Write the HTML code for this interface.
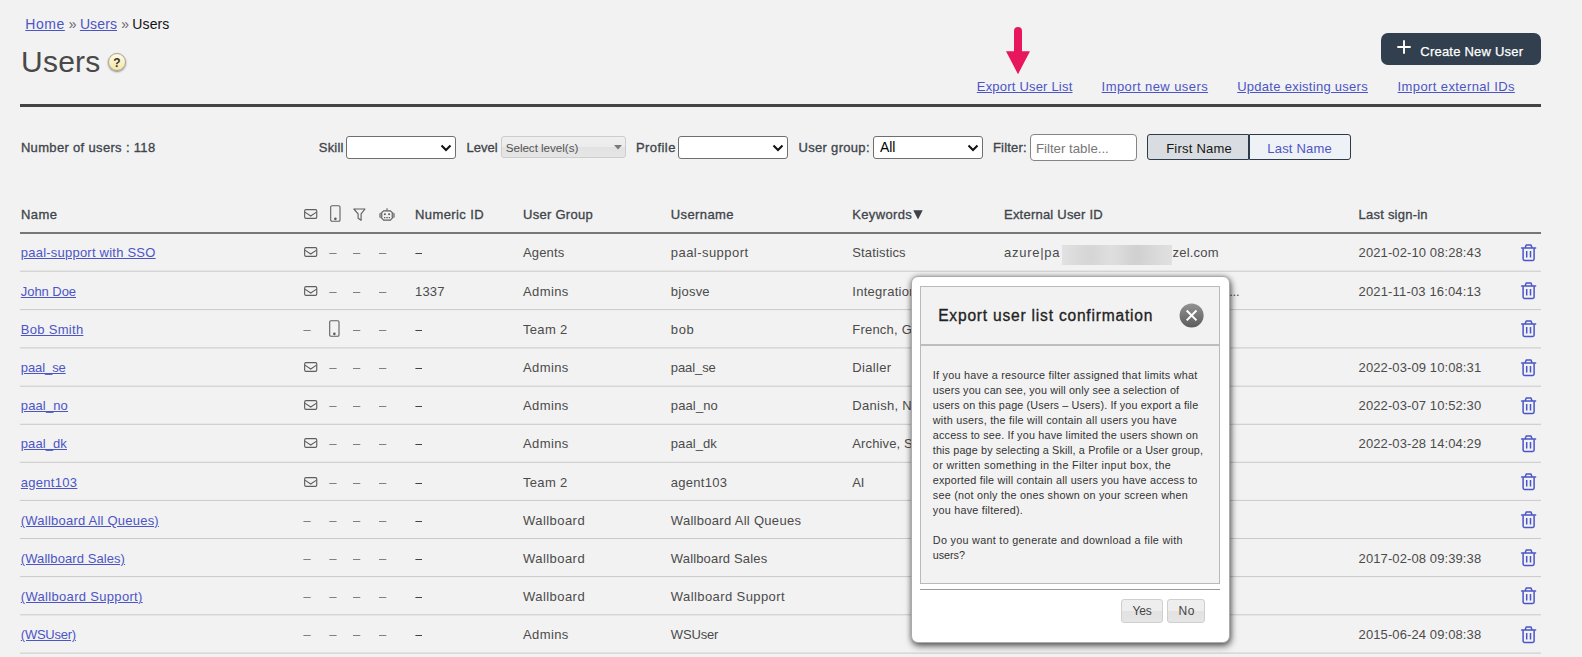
<!DOCTYPE html>
<html lang="en">
<head>
<meta charset="utf-8">
<title>Users</title>
<style>
html,body{margin:0;padding:0;}
body{width:1582px;height:657px;overflow:hidden;background:#f2f2f2;position:relative;font-family:"Liberation Sans",sans-serif;}
.t{position:absolute;white-space:nowrap;font-family:"Liberation Sans",sans-serif;font-weight:400;text-underline-offset:1px;text-decoration-thickness:1px;}
.a{position:absolute;}
.hr{position:absolute;left:20px;width:1521px;}
.sel{position:absolute;box-sizing:border-box;height:23px;top:136px;width:110px;background:#fff;border:1px solid #6f6f6f;border-radius:3px;}
.sel svg{position:absolute;right:3.4px;top:6px;}
.dash{position:absolute;height:1px;width:7px;background:#858585;}
.ico{position:absolute;overflow:visible;}
#modal{position:absolute;left:911px;top:276px;width:318.6px;height:366.6px;box-sizing:border-box;background:#fff;border:1px solid #ababab;border-radius:7px;box-shadow:1px 3px 7px rgba(0,0,0,.62),0 0 5px rgba(0,0,0,.22);}
#mpanel{position:absolute;left:920px;top:286px;width:300px;height:298px;box-sizing:border-box;background:#f2f2f2;border:1px solid #b9b9b9;}
.btn{position:absolute;box-sizing:border-box;top:599px;height:24px;border:1px solid #cfcfcf;border-radius:3px;background:linear-gradient(#eeeeee 0%,#eeeeee 50%,#e2e2e2 51%,#e6e6e6 100%);}
</style>
</head>
<body>

<!-- title rule -->
<div class="hr" style="top:104px;height:3px;background:#444;"></div>

<!-- help icon -->
<div class="a" style="left:108px;top:53px;width:18px;height:18px;box-sizing:border-box;border-radius:50%;border:1px solid #a9a48c;background:linear-gradient(#fffbe6,#f7e6a6);box-shadow:0 1px 2px rgba(0,0,0,.45);"></div>
<span class="t" style="left:113.2px;top:55.5px;font-size:12px;line-height:14px;font-weight:700;color:#333;">?</span>

<!-- red arrow -->
<svg class="ico" style="left:1004px;top:24px;" width="28" height="52" viewBox="0 0 28 52">
  <path d="M10 7 a4 4 0 0 1 8 0 V27.3 H26 L14 50.3 L2 27.3 H10 Z" fill="#e8175d"/>
</svg>

<!-- create button -->
<div class="a" style="left:1381px;top:33px;width:160px;height:32px;border-radius:7px;background:#313f4e;"></div>
<svg class="ico" style="left:1396.5px;top:40px;" width="14" height="14" viewBox="0 0 14 14"><path d="M7 0.3V13.7M0.3 7H13.7" stroke="#fff" stroke-width="1.9" fill="none"/></svg>

<!-- selects -->
<div class="sel" style="left:346px;"><svg width="12" height="10" viewBox="0 0 12 10"><path d="M1.5 2.5 L6 7 L10.5 2.5" fill="none" stroke="#111" stroke-width="2"/></svg></div>
<div class="sel" style="left:678px;"><svg width="12" height="10" viewBox="0 0 12 10"><path d="M1.5 2.5 L6 7 L10.5 2.5" fill="none" stroke="#111" stroke-width="2"/></svg></div>
<div class="sel" style="left:873px;"><svg width="12" height="10" viewBox="0 0 12 10"><path d="M1.5 2.5 L6 7 L10.5 2.5" fill="none" stroke="#111" stroke-width="2"/></svg></div>
<!-- level multiselect -->
<div class="a" style="left:501px;top:136px;width:125px;height:22px;box-sizing:border-box;border:1px solid #cdcdcd;border-radius:3px;background:linear-gradient(#efefef 0%,#ececec 50%,#e2e2e2 51%,#e6e6e6 100%);"></div>
<svg class="ico" style="left:613.5px;top:145px;" width="8" height="5" viewBox="0 0 8 5"><path d="M0 0H8L4 4.6Z" fill="#7a7a7a"/></svg>
<!-- filter input -->
<div class="a" style="left:1030px;top:134px;width:107px;height:27px;box-sizing:border-box;border:1px solid #858585;border-radius:4px;background:#fff;"></div>
<!-- name toggle -->
<div class="a" style="left:1147px;top:134px;width:102px;height:26px;box-sizing:border-box;border:1px solid #2c3a49;border-radius:3px 0 0 3px;background:#d9dce0;"></div>
<div class="a" style="left:1249px;top:134px;width:102px;height:26px;box-sizing:border-box;border:1px solid #2c3a49;border-radius:0 3px 3px 0;background:#eef1f6;"></div>

<!-- table header rule -->
<div class="hr" style="top:232px;height:2px;background:#767676;"></div>
<!-- sort triangle after Keywords -->
<svg class="ico" style="left:913px;top:209.5px;" width="10" height="10" viewBox="0 0 10 10"><path d="M0.3 0.3H9.7L5 9.6Z" fill="#3d4248"/></svg>

<!-- header icons -->
<svg class="ico" style="left:304px;top:209px" width="14" height="11" viewBox="0 0 14 11"><rect x="0.65" y="0.65" width="12.1" height="8.7" rx="1.3" fill="none" stroke="#5f5f5f" stroke-width="1.15"/><path d="M0.9 3.1 L6.7 7 L12.5 3.1" fill="none" stroke="#5f5f5f" stroke-width="1.1"/></svg><svg class="ico" style="left:329.5px;top:205.1px" width="12" height="18" viewBox="0 0 12 18"><rect x="0.7" y="0.7" width="9.3" height="15.5" rx="1.3" fill="none" stroke="#5f5f5f" stroke-width="1.08"/><circle cx="5.35" cy="13.8" r="1.35" fill="#5f5f5f"/></svg><svg class="ico" style="left:352.6px;top:207.6px" width="14" height="14" viewBox="0 0 14 14"><path d="M0.9 1 H12 L8.1 5.8 V12.3 L5.1 10.2 V5.8 Z" fill="none" stroke="#5f5f5f" stroke-width="1.15" stroke-linejoin="round"/></svg><svg class="ico" style="left:379px;top:207.6px" width="17" height="14" viewBox="0 0 17 14"><path d="M8 0.2V2.6" stroke="#5f5f5f" stroke-width="1.1"/><path d="M4.6 2.8 H11.4 L13.3 4.7 V10.2 L11.4 12.1 H4.6 L2.7 10.2 V4.7 Z" fill="none" stroke="#5f5f5f" stroke-width="1.2" stroke-linejoin="round"/><rect x="0.6" y="5.2" width="2" height="4.4" rx="0.5" fill="#9a9a9a" stroke="#5f5f5f" stroke-width="0.5"/><rect x="13.4" y="5.2" width="2" height="4.4" rx="0.5" fill="#9a9a9a" stroke="#5f5f5f" stroke-width="0.5"/><circle cx="5.9" cy="6.3" r="1.05" fill="#5f5f5f"/><circle cx="10.1" cy="6.3" r="1.05" fill="#5f5f5f"/><path d="M5 9.6H6.3M7.2 9.6H8.8M9.7 9.6H11" stroke="#5f5f5f" stroke-width="1.1"/></svg>

<svg class="ico" style="left:0;top:0" width="1582" height="657" viewBox="0 0 1582 657"><rect x="20" y="270.70" width="1521" height="1" fill="#c9c9c9"/><rect x="329.3" y="253.00" width="7.3" height="1" fill="#808080"/><rect x="353" y="253.00" width="7.3" height="1" fill="#808080"/><rect x="379" y="253.00" width="7.3" height="1" fill="#808080"/><rect x="415.4" y="253.00" width="6.6" height="1" fill="#444"/><rect x="20" y="309.10" width="1521" height="1" fill="#c9c9c9"/><rect x="329.3" y="292.00" width="7.3" height="1" fill="#808080"/><rect x="353" y="292.00" width="7.3" height="1" fill="#808080"/><rect x="379" y="292.00" width="7.3" height="1" fill="#808080"/><rect x="20" y="347.40" width="1521" height="1" fill="#c9c9c9"/><rect x="303.4" y="330.00" width="7.3" height="1" fill="#808080"/><rect x="353" y="330.00" width="7.3" height="1" fill="#808080"/><rect x="379" y="330.00" width="7.3" height="1" fill="#808080"/><rect x="415.4" y="330.00" width="6.6" height="1" fill="#444"/><rect x="20" y="385.70" width="1521" height="1" fill="#c9c9c9"/><rect x="329.3" y="368.00" width="7.3" height="1" fill="#808080"/><rect x="353" y="368.00" width="7.3" height="1" fill="#808080"/><rect x="379" y="368.00" width="7.3" height="1" fill="#808080"/><rect x="415.4" y="368.00" width="6.6" height="1" fill="#444"/><rect x="20" y="423.80" width="1521" height="1" fill="#c9c9c9"/><rect x="329.3" y="406.00" width="7.3" height="1" fill="#808080"/><rect x="353" y="406.00" width="7.3" height="1" fill="#808080"/><rect x="379" y="406.00" width="7.3" height="1" fill="#808080"/><rect x="415.4" y="406.00" width="6.6" height="1" fill="#444"/><rect x="20" y="461.80" width="1521" height="1" fill="#c9c9c9"/><rect x="329.3" y="444.00" width="7.3" height="1" fill="#808080"/><rect x="353" y="444.00" width="7.3" height="1" fill="#808080"/><rect x="379" y="444.00" width="7.3" height="1" fill="#808080"/><rect x="415.4" y="444.00" width="6.6" height="1" fill="#444"/><rect x="20" y="499.90" width="1521" height="1" fill="#c9c9c9"/><rect x="329.3" y="483.00" width="7.3" height="1" fill="#808080"/><rect x="353" y="483.00" width="7.3" height="1" fill="#808080"/><rect x="379" y="483.00" width="7.3" height="1" fill="#808080"/><rect x="415.4" y="483.00" width="6.6" height="1" fill="#444"/><rect x="20" y="538.00" width="1521" height="1" fill="#c9c9c9"/><rect x="303.4" y="521.00" width="7.3" height="1" fill="#808080"/><rect x="329.3" y="521.00" width="7.3" height="1" fill="#808080"/><rect x="353" y="521.00" width="7.3" height="1" fill="#808080"/><rect x="379" y="521.00" width="7.3" height="1" fill="#808080"/><rect x="415.4" y="521.00" width="6.6" height="1" fill="#444"/><rect x="20" y="576.10" width="1521" height="1" fill="#c9c9c9"/><rect x="303.4" y="559.00" width="7.3" height="1" fill="#808080"/><rect x="329.3" y="559.00" width="7.3" height="1" fill="#808080"/><rect x="353" y="559.00" width="7.3" height="1" fill="#808080"/><rect x="379" y="559.00" width="7.3" height="1" fill="#808080"/><rect x="415.4" y="559.00" width="6.6" height="1" fill="#444"/><rect x="20" y="614.30" width="1521" height="1" fill="#c9c9c9"/><rect x="303.4" y="597.00" width="7.3" height="1" fill="#808080"/><rect x="329.3" y="597.00" width="7.3" height="1" fill="#808080"/><rect x="353" y="597.00" width="7.3" height="1" fill="#808080"/><rect x="379" y="597.00" width="7.3" height="1" fill="#808080"/><rect x="415.4" y="597.00" width="6.6" height="1" fill="#444"/><rect x="20" y="652.60" width="1521" height="1" fill="#c9c9c9"/><rect x="303.4" y="635.00" width="7.3" height="1" fill="#808080"/><rect x="329.3" y="635.00" width="7.3" height="1" fill="#808080"/><rect x="353" y="635.00" width="7.3" height="1" fill="#808080"/><rect x="379" y="635.00" width="7.3" height="1" fill="#808080"/><rect x="415.4" y="635.00" width="6.6" height="1" fill="#444"/></svg>
<svg class="ico" style="left:303.7px;top:246.85px" width="14" height="11" viewBox="0 0 14 11"><rect x="0.65" y="0.65" width="12.1" height="8.7" rx="1.3" fill="none" stroke="#5f5f5f" stroke-width="1.15"/><path d="M0.9 3.1 L6.7 7 L12.5 3.1" fill="none" stroke="#5f5f5f" stroke-width="1.1"/></svg><svg class="ico" style="left:1520.7px;top:243.7px" width="16" height="18" viewBox="0 0 16 18"><path d="M0.6 4.1H14.6" stroke="#4a55c8" stroke-width="1.5" stroke-linecap="round"/><path d="M4.1 3.9 L5.2 1.1 H10 L11.1 3.9" fill="none" stroke="#4a55c8" stroke-width="1.5" stroke-linejoin="round"/><path d="M2.1 4.3 V15 a1.4 1.4 0 0 0 1.4 1.4 H11.7 a1.4 1.4 0 0 0 1.4 -1.4 V4.3" fill="none" stroke="#4a55c8" stroke-width="1.5"/><path d="M5.7 6.9V13.6M9.5 6.9V13.6" stroke="#4a55c8" stroke-width="1.5"/></svg>
<svg class="ico" style="left:303.7px;top:285.85px" width="14" height="11" viewBox="0 0 14 11"><rect x="0.65" y="0.65" width="12.1" height="8.7" rx="1.3" fill="none" stroke="#5f5f5f" stroke-width="1.15"/><path d="M0.9 3.1 L6.7 7 L12.5 3.1" fill="none" stroke="#5f5f5f" stroke-width="1.1"/></svg><svg class="ico" style="left:1520.7px;top:282.0px" width="16" height="18" viewBox="0 0 16 18"><path d="M0.6 4.1H14.6" stroke="#4a55c8" stroke-width="1.5" stroke-linecap="round"/><path d="M4.1 3.9 L5.2 1.1 H10 L11.1 3.9" fill="none" stroke="#4a55c8" stroke-width="1.5" stroke-linejoin="round"/><path d="M2.1 4.3 V15 a1.4 1.4 0 0 0 1.4 1.4 H11.7 a1.4 1.4 0 0 0 1.4 -1.4 V4.3" fill="none" stroke="#4a55c8" stroke-width="1.5"/><path d="M5.7 6.9V13.6M9.5 6.9V13.6" stroke="#4a55c8" stroke-width="1.5"/></svg>
<svg class="ico" style="left:329.25px;top:319.8px" width="12" height="18" viewBox="0 0 12 18"><rect x="0.7" y="0.7" width="9.3" height="15.5" rx="1.3" fill="none" stroke="#5f5f5f" stroke-width="1.08"/><circle cx="5.35" cy="13.8" r="1.35" fill="#5f5f5f"/></svg><svg class="ico" style="left:1520.7px;top:320.35px" width="16" height="18" viewBox="0 0 16 18"><path d="M0.6 4.1H14.6" stroke="#4a55c8" stroke-width="1.5" stroke-linecap="round"/><path d="M4.1 3.9 L5.2 1.1 H10 L11.1 3.9" fill="none" stroke="#4a55c8" stroke-width="1.5" stroke-linejoin="round"/><path d="M2.1 4.3 V15 a1.4 1.4 0 0 0 1.4 1.4 H11.7 a1.4 1.4 0 0 0 1.4 -1.4 V4.3" fill="none" stroke="#4a55c8" stroke-width="1.5"/><path d="M5.7 6.9V13.6M9.5 6.9V13.6" stroke="#4a55c8" stroke-width="1.5"/></svg>
<svg class="ico" style="left:303.7px;top:361.85px" width="14" height="11" viewBox="0 0 14 11"><rect x="0.65" y="0.65" width="12.1" height="8.7" rx="1.3" fill="none" stroke="#5f5f5f" stroke-width="1.15"/><path d="M0.9 3.1 L6.7 7 L12.5 3.1" fill="none" stroke="#5f5f5f" stroke-width="1.1"/></svg><svg class="ico" style="left:1520.7px;top:358.65px" width="16" height="18" viewBox="0 0 16 18"><path d="M0.6 4.1H14.6" stroke="#4a55c8" stroke-width="1.5" stroke-linecap="round"/><path d="M4.1 3.9 L5.2 1.1 H10 L11.1 3.9" fill="none" stroke="#4a55c8" stroke-width="1.5" stroke-linejoin="round"/><path d="M2.1 4.3 V15 a1.4 1.4 0 0 0 1.4 1.4 H11.7 a1.4 1.4 0 0 0 1.4 -1.4 V4.3" fill="none" stroke="#4a55c8" stroke-width="1.5"/><path d="M5.7 6.9V13.6M9.5 6.9V13.6" stroke="#4a55c8" stroke-width="1.5"/></svg>
<svg class="ico" style="left:303.7px;top:399.85px" width="14" height="11" viewBox="0 0 14 11"><rect x="0.65" y="0.65" width="12.1" height="8.7" rx="1.3" fill="none" stroke="#5f5f5f" stroke-width="1.15"/><path d="M0.9 3.1 L6.7 7 L12.5 3.1" fill="none" stroke="#5f5f5f" stroke-width="1.1"/></svg><svg class="ico" style="left:1520.7px;top:396.85px" width="16" height="18" viewBox="0 0 16 18"><path d="M0.6 4.1H14.6" stroke="#4a55c8" stroke-width="1.5" stroke-linecap="round"/><path d="M4.1 3.9 L5.2 1.1 H10 L11.1 3.9" fill="none" stroke="#4a55c8" stroke-width="1.5" stroke-linejoin="round"/><path d="M2.1 4.3 V15 a1.4 1.4 0 0 0 1.4 1.4 H11.7 a1.4 1.4 0 0 0 1.4 -1.4 V4.3" fill="none" stroke="#4a55c8" stroke-width="1.5"/><path d="M5.7 6.9V13.6M9.5 6.9V13.6" stroke="#4a55c8" stroke-width="1.5"/></svg>
<svg class="ico" style="left:303.7px;top:437.85px" width="14" height="11" viewBox="0 0 14 11"><rect x="0.65" y="0.65" width="12.1" height="8.7" rx="1.3" fill="none" stroke="#5f5f5f" stroke-width="1.15"/><path d="M0.9 3.1 L6.7 7 L12.5 3.1" fill="none" stroke="#5f5f5f" stroke-width="1.1"/></svg><svg class="ico" style="left:1520.7px;top:434.9px" width="16" height="18" viewBox="0 0 16 18"><path d="M0.6 4.1H14.6" stroke="#4a55c8" stroke-width="1.5" stroke-linecap="round"/><path d="M4.1 3.9 L5.2 1.1 H10 L11.1 3.9" fill="none" stroke="#4a55c8" stroke-width="1.5" stroke-linejoin="round"/><path d="M2.1 4.3 V15 a1.4 1.4 0 0 0 1.4 1.4 H11.7 a1.4 1.4 0 0 0 1.4 -1.4 V4.3" fill="none" stroke="#4a55c8" stroke-width="1.5"/><path d="M5.7 6.9V13.6M9.5 6.9V13.6" stroke="#4a55c8" stroke-width="1.5"/></svg>
<svg class="ico" style="left:303.7px;top:476.85px" width="14" height="11" viewBox="0 0 14 11"><rect x="0.65" y="0.65" width="12.1" height="8.7" rx="1.3" fill="none" stroke="#5f5f5f" stroke-width="1.15"/><path d="M0.9 3.1 L6.7 7 L12.5 3.1" fill="none" stroke="#5f5f5f" stroke-width="1.1"/></svg><svg class="ico" style="left:1520.7px;top:472.95px" width="16" height="18" viewBox="0 0 16 18"><path d="M0.6 4.1H14.6" stroke="#4a55c8" stroke-width="1.5" stroke-linecap="round"/><path d="M4.1 3.9 L5.2 1.1 H10 L11.1 3.9" fill="none" stroke="#4a55c8" stroke-width="1.5" stroke-linejoin="round"/><path d="M2.1 4.3 V15 a1.4 1.4 0 0 0 1.4 1.4 H11.7 a1.4 1.4 0 0 0 1.4 -1.4 V4.3" fill="none" stroke="#4a55c8" stroke-width="1.5"/><path d="M5.7 6.9V13.6M9.5 6.9V13.6" stroke="#4a55c8" stroke-width="1.5"/></svg>
<svg class="ico" style="left:1520.7px;top:511.05px" width="16" height="18" viewBox="0 0 16 18"><path d="M0.6 4.1H14.6" stroke="#4a55c8" stroke-width="1.5" stroke-linecap="round"/><path d="M4.1 3.9 L5.2 1.1 H10 L11.1 3.9" fill="none" stroke="#4a55c8" stroke-width="1.5" stroke-linejoin="round"/><path d="M2.1 4.3 V15 a1.4 1.4 0 0 0 1.4 1.4 H11.7 a1.4 1.4 0 0 0 1.4 -1.4 V4.3" fill="none" stroke="#4a55c8" stroke-width="1.5"/><path d="M5.7 6.9V13.6M9.5 6.9V13.6" stroke="#4a55c8" stroke-width="1.5"/></svg>
<svg class="ico" style="left:1520.7px;top:549.15px" width="16" height="18" viewBox="0 0 16 18"><path d="M0.6 4.1H14.6" stroke="#4a55c8" stroke-width="1.5" stroke-linecap="round"/><path d="M4.1 3.9 L5.2 1.1 H10 L11.1 3.9" fill="none" stroke="#4a55c8" stroke-width="1.5" stroke-linejoin="round"/><path d="M2.1 4.3 V15 a1.4 1.4 0 0 0 1.4 1.4 H11.7 a1.4 1.4 0 0 0 1.4 -1.4 V4.3" fill="none" stroke="#4a55c8" stroke-width="1.5"/><path d="M5.7 6.9V13.6M9.5 6.9V13.6" stroke="#4a55c8" stroke-width="1.5"/></svg>
<svg class="ico" style="left:1520.7px;top:587.3px" width="16" height="18" viewBox="0 0 16 18"><path d="M0.6 4.1H14.6" stroke="#4a55c8" stroke-width="1.5" stroke-linecap="round"/><path d="M4.1 3.9 L5.2 1.1 H10 L11.1 3.9" fill="none" stroke="#4a55c8" stroke-width="1.5" stroke-linejoin="round"/><path d="M2.1 4.3 V15 a1.4 1.4 0 0 0 1.4 1.4 H11.7 a1.4 1.4 0 0 0 1.4 -1.4 V4.3" fill="none" stroke="#4a55c8" stroke-width="1.5"/><path d="M5.7 6.9V13.6M9.5 6.9V13.6" stroke="#4a55c8" stroke-width="1.5"/></svg>
<svg class="ico" style="left:1520.7px;top:625.55px" width="16" height="18" viewBox="0 0 16 18"><path d="M0.6 4.1H14.6" stroke="#4a55c8" stroke-width="1.5" stroke-linecap="round"/><path d="M4.1 3.9 L5.2 1.1 H10 L11.1 3.9" fill="none" stroke="#4a55c8" stroke-width="1.5" stroke-linejoin="round"/><path d="M2.1 4.3 V15 a1.4 1.4 0 0 0 1.4 1.4 H11.7 a1.4 1.4 0 0 0 1.4 -1.4 V4.3" fill="none" stroke="#4a55c8" stroke-width="1.5"/><path d="M5.7 6.9V13.6M9.5 6.9V13.6" stroke="#4a55c8" stroke-width="1.5"/></svg>


<!-- blurred patch -->
<div class="a" style="left:1062px;top:245px;width:110px;height:20px;overflow:hidden;background:#dedede;">
  <div style="position:absolute;left:-10px;top:-6px;width:130px;height:32px;filter:blur(4px);background:linear-gradient(90deg,#e6e6e6 0%,#d4d4d4 30%,#e0e0e0 45%,#cfcfcf 65%,#dadada 80%,#e4e4e4 100%);"></div>
</div>

<span class="t" style="left:25.3px;top:15.8px;font-size:14px;line-height:16px;letter-spacing:0.555px;color:#4c55c6;text-decoration:underline;">Home</span>
<span class="t" style="left:68.7px;top:15.8px;font-size:14px;line-height:16px;letter-spacing:-0.844px;color:#666;">»</span>
<span class="t" style="left:79.9px;top:15.8px;font-size:14px;line-height:16px;letter-spacing:0.116px;color:#4c55c6;text-decoration:underline;">Users</span>
<span class="t" style="left:121.2px;top:15.8px;font-size:14px;line-height:16px;letter-spacing:-0.844px;color:#666;">»</span>
<span class="t" style="left:132.3px;top:15.8px;font-size:14px;line-height:16px;letter-spacing:0.116px;color:#111;">Users</span>
<span class="t" style="left:21.0px;top:44.8px;font-size:30px;line-height:33px;letter-spacing:0.247px;color:#494949;">Users</span>
<span class="t" style="left:976.8px;top:79.1px;font-size:13px;line-height:15px;letter-spacing:0.200px;color:#4c55c6;text-decoration:underline;">Export User List</span>
<span class="t" style="left:1101.6px;top:79.1px;font-size:13px;line-height:15px;letter-spacing:0.423px;color:#4c55c6;text-decoration:underline;">Import new users</span>
<span class="t" style="left:1237.2px;top:79.1px;font-size:13px;line-height:15px;letter-spacing:0.276px;color:#4c55c6;text-decoration:underline;">Update existing users</span>
<span class="t" style="left:1397.6px;top:79.1px;font-size:13px;line-height:15px;letter-spacing:0.390px;color:#4c55c6;text-decoration:underline;">Import external IDs</span>
<span class="t" style="left:1420.3px;top:44.2px;font-size:13px;line-height:15px;letter-spacing:0.219px;color:#ffffff;-webkit-text-stroke:0.25px;">Create New User</span>
<span class="t" style="left:20.9px;top:140.1px;font-size:13px;line-height:15px;letter-spacing:0.331px;color:#40454b;-webkit-text-stroke:0.32px;">Number of users : 118</span>
<span class="t" style="left:318.8px;top:140.1px;font-size:13px;line-height:15px;letter-spacing:0.198px;color:#40454b;-webkit-text-stroke:0.32px;">Skill</span>
<span class="t" style="left:466.4px;top:140.1px;font-size:13px;line-height:15px;letter-spacing:0.044px;color:#40454b;-webkit-text-stroke:0.32px;">Level</span>
<span class="t" style="left:635.9px;top:140.1px;font-size:13px;line-height:15px;letter-spacing:0.443px;color:#40454b;-webkit-text-stroke:0.32px;">Profile</span>
<span class="t" style="left:798.5px;top:140.1px;font-size:13px;line-height:15px;letter-spacing:0.307px;color:#40454b;-webkit-text-stroke:0.32px;">User group:</span>
<span class="t" style="left:993.0px;top:140.1px;font-size:13px;line-height:15px;letter-spacing:0.171px;color:#40454b;-webkit-text-stroke:0.32px;">Filter:</span>
<span class="t" style="left:505.7px;top:141.2px;font-size:11.7px;line-height:13px;letter-spacing:-0.054px;color:#555;">Select level(s)</span>
<span class="t" style="left:1036.0px;top:141.2px;font-size:13.3px;line-height:15px;letter-spacing:-0.025px;color:#787878;">Filter table...</span>
<span class="t" style="left:880.0px;top:138.8px;font-size:14px;line-height:16px;letter-spacing:-0.087px;color:#000;">All</span>
<span class="t" style="left:1166.2px;top:140.6px;font-size:13px;line-height:15px;letter-spacing:0.230px;color:#151515;">First Name</span>
<span class="t" style="left:1267.3px;top:140.6px;font-size:13px;line-height:15px;letter-spacing:0.188px;color:#4c55c6;">Last Name</span>
<span class="t" style="left:20.9px;top:207.0px;font-size:13px;line-height:15px;letter-spacing:0.499px;color:#40454b;-webkit-text-stroke:0.32px;">Name</span>
<span class="t" style="left:415.0px;top:207.0px;font-size:13px;line-height:15px;letter-spacing:0.412px;color:#40454b;-webkit-text-stroke:0.32px;">Numeric ID</span>
<span class="t" style="left:523.0px;top:207.0px;font-size:13px;line-height:15px;letter-spacing:0.280px;color:#40454b;-webkit-text-stroke:0.32px;">User Group</span>
<span class="t" style="left:670.8px;top:207.0px;font-size:13px;line-height:15px;letter-spacing:0.399px;color:#40454b;-webkit-text-stroke:0.32px;">Username</span>
<span class="t" style="left:852.3px;top:207.0px;font-size:13px;line-height:15px;letter-spacing:0.338px;color:#40454b;-webkit-text-stroke:0.32px;">Keywords</span>
<span class="t" style="left:1004.0px;top:207.0px;font-size:13px;line-height:15px;letter-spacing:0.219px;color:#40454b;-webkit-text-stroke:0.32px;">External User ID</span>
<span class="t" style="left:1358.6px;top:207.0px;font-size:13px;line-height:15px;letter-spacing:0.223px;color:#40454b;-webkit-text-stroke:0.32px;">Last sign-in</span>
<span class="t" style="left:20.8px;top:245.0px;font-size:13px;line-height:15px;letter-spacing:0.225px;color:#4c55c6;text-decoration:underline;">paal-support with SSO</span>
<span class="t" style="left:523.0px;top:245.0px;font-size:13px;line-height:15px;letter-spacing:0.151px;color:#4b4b4b;">Agents</span>
<span class="t" style="left:670.8px;top:245.0px;font-size:13px;line-height:15px;letter-spacing:0.453px;color:#4b4b4b;">paal-support</span>
<span class="t" style="left:852.3px;top:245.0px;font-size:13px;line-height:15px;letter-spacing:0.142px;color:#4b4b4b;">Statistics</span>
<span class="t" style="left:1358.6px;top:245.0px;font-size:13px;line-height:15px;letter-spacing:0.101px;color:#4b4b4b;">2021-02-10 08:28:43</span>
<span class="t" style="left:20.8px;top:284.0px;font-size:13px;line-height:15px;letter-spacing:-0.059px;color:#4c55c6;text-decoration:underline;">John Doe</span>
<span class="t" style="left:415.0px;top:284.0px;font-size:13px;line-height:15px;letter-spacing:0.203px;color:#4b4b4b;">1337</span>
<span class="t" style="left:523.0px;top:284.0px;font-size:13px;line-height:15px;letter-spacing:0.385px;color:#4b4b4b;">Admins</span>
<span class="t" style="left:670.8px;top:284.0px;font-size:13px;line-height:15px;letter-spacing:0.245px;color:#4b4b4b;">bjosve</span>
<span class="t" style="left:852.3px;top:284.0px;font-size:13px;line-height:15px;letter-spacing:0.276px;color:#4b4b4b;">Integration, Statistics</span>
<span class="t" style="left:1358.6px;top:284.0px;font-size:13px;line-height:15px;letter-spacing:0.152px;color:#4b4b4b;">2021-11-03 16:04:13</span>
<span class="t" style="left:20.8px;top:322.0px;font-size:13px;line-height:15px;letter-spacing:0.292px;color:#4c55c6;text-decoration:underline;">Bob Smith</span>
<span class="t" style="left:523.0px;top:322.0px;font-size:13px;line-height:15px;letter-spacing:0.315px;color:#4b4b4b;">Team 2</span>
<span class="t" style="left:670.8px;top:322.0px;font-size:13px;line-height:15px;letter-spacing:0.677px;color:#4b4b4b;">bob</span>
<span class="t" style="left:852.3px;top:322.0px;font-size:13px;line-height:15px;letter-spacing:0.206px;color:#4b4b4b;">French, German</span>
<span class="t" style="left:20.8px;top:360.0px;font-size:13px;line-height:15px;letter-spacing:-0.096px;color:#4c55c6;text-decoration:underline;">paal_se</span>
<span class="t" style="left:523.0px;top:360.0px;font-size:13px;line-height:15px;letter-spacing:0.385px;color:#4b4b4b;">Admins</span>
<span class="t" style="left:670.8px;top:360.0px;font-size:13px;line-height:15px;letter-spacing:-0.096px;color:#4b4b4b;">paal_se</span>
<span class="t" style="left:852.3px;top:360.0px;font-size:13px;line-height:15px;letter-spacing:0.326px;color:#4b4b4b;">Dialler</span>
<span class="t" style="left:1358.6px;top:360.0px;font-size:13px;line-height:15px;letter-spacing:0.101px;color:#4b4b4b;">2022-03-09 10:08:31</span>
<span class="t" style="left:20.8px;top:398.0px;font-size:13px;line-height:15px;letter-spacing:0.127px;color:#4c55c6;text-decoration:underline;">paal_no</span>
<span class="t" style="left:523.0px;top:398.0px;font-size:13px;line-height:15px;letter-spacing:0.385px;color:#4b4b4b;">Admins</span>
<span class="t" style="left:670.8px;top:398.0px;font-size:13px;line-height:15px;letter-spacing:0.127px;color:#4b4b4b;">paal_no</span>
<span class="t" style="left:852.3px;top:398.0px;font-size:13px;line-height:15px;letter-spacing:0.283px;color:#4b4b4b;">Danish, Norwegian</span>
<span class="t" style="left:1358.6px;top:398.0px;font-size:13px;line-height:15px;letter-spacing:0.101px;color:#4b4b4b;">2022-03-07 10:52:30</span>
<span class="t" style="left:20.8px;top:436.0px;font-size:13px;line-height:15px;letter-spacing:0.089px;color:#4c55c6;text-decoration:underline;">paal_dk</span>
<span class="t" style="left:523.0px;top:436.0px;font-size:13px;line-height:15px;letter-spacing:0.385px;color:#4b4b4b;">Admins</span>
<span class="t" style="left:670.8px;top:436.0px;font-size:13px;line-height:15px;letter-spacing:0.089px;color:#4b4b4b;">paal_dk</span>
<span class="t" style="left:852.3px;top:436.0px;font-size:13px;line-height:15px;letter-spacing:0.126px;color:#4b4b4b;">Archive, Statistics</span>
<span class="t" style="left:1358.6px;top:436.0px;font-size:13px;line-height:15px;letter-spacing:0.101px;color:#4b4b4b;">2022-03-28 14:04:29</span>
<span class="t" style="left:20.8px;top:475.0px;font-size:13px;line-height:15px;letter-spacing:0.283px;color:#4c55c6;text-decoration:underline;">agent103</span>
<span class="t" style="left:523.0px;top:475.0px;font-size:13px;line-height:15px;letter-spacing:0.315px;color:#4b4b4b;">Team 2</span>
<span class="t" style="left:670.8px;top:475.0px;font-size:13px;line-height:15px;letter-spacing:0.283px;color:#4b4b4b;">agent103</span>
<span class="t" style="left:852.3px;top:475.0px;font-size:13px;line-height:15px;letter-spacing:-0.219px;color:#4b4b4b;">AI</span>
<span class="t" style="left:20.8px;top:513.0px;font-size:13px;line-height:15px;letter-spacing:0.224px;color:#4c55c6;text-decoration:underline;">(Wallboard All Queues)</span>
<span class="t" style="left:523.0px;top:513.0px;font-size:13px;line-height:15px;letter-spacing:0.446px;color:#4b4b4b;">Wallboard</span>
<span class="t" style="left:670.8px;top:513.0px;font-size:13px;line-height:15px;letter-spacing:0.296px;color:#4b4b4b;">Wallboard All Queues</span>
<span class="t" style="left:20.8px;top:551.0px;font-size:13px;line-height:15px;letter-spacing:0.082px;color:#4c55c6;text-decoration:underline;">(Wallboard Sales)</span>
<span class="t" style="left:523.0px;top:551.0px;font-size:13px;line-height:15px;letter-spacing:0.446px;color:#4b4b4b;">Wallboard</span>
<span class="t" style="left:670.8px;top:551.0px;font-size:13px;line-height:15px;letter-spacing:0.158px;color:#4b4b4b;">Wallboard Sales</span>
<span class="t" style="left:1358.6px;top:551.0px;font-size:13px;line-height:15px;letter-spacing:0.101px;color:#4b4b4b;">2017-02-08 09:39:38</span>
<span class="t" style="left:20.8px;top:589.0px;font-size:13px;line-height:15px;letter-spacing:0.317px;color:#4c55c6;text-decoration:underline;">(Wallboard Support)</span>
<span class="t" style="left:523.0px;top:589.0px;font-size:13px;line-height:15px;letter-spacing:0.446px;color:#4b4b4b;">Wallboard</span>
<span class="t" style="left:670.8px;top:589.0px;font-size:13px;line-height:15px;letter-spacing:0.414px;color:#4b4b4b;">Wallboard Support</span>
<span class="t" style="left:20.8px;top:627.0px;font-size:13px;line-height:15px;letter-spacing:-0.244px;color:#4c55c6;text-decoration:underline;">(WSUser)</span>
<span class="t" style="left:523.0px;top:627.0px;font-size:13px;line-height:15px;letter-spacing:0.385px;color:#4b4b4b;">Admins</span>
<span class="t" style="left:670.8px;top:627.0px;font-size:13px;line-height:15px;letter-spacing:-0.161px;color:#4b4b4b;">WSUser</span>
<span class="t" style="left:1358.6px;top:627.0px;font-size:13px;line-height:15px;letter-spacing:0.101px;color:#4b4b4b;">2015-06-24 09:08:38</span>
<span class="t" style="left:1004.0px;top:245.0px;font-size:13px;line-height:15px;letter-spacing:0.734px;color:#4b4b4b;">azure|pa</span>
<span class="t" style="left:1172.5px;top:245.0px;font-size:13px;line-height:15px;letter-spacing:0.199px;color:#4b4b4b;">zel.com</span>
<span class="t" style="left:1229.2px;top:284.0px;font-size:13px;line-height:15px;letter-spacing:-0.248px;color:#4b4b4b;">...</span>

<!-- modal -->
<div id="modal"></div>
<div id="mpanel"></div>
<div class="a" style="left:921px;top:344px;width:298px;height:2px;background:#bdbdbd;"></div>
<div class="a" style="left:920px;top:589px;width:300px;height:1px;background:#9a9a9a;"></div>
<!-- close button -->
<svg class="ico" style="left:1178px;top:302px;" width="28" height="28" viewBox="0 0 28 28">
  <defs><linearGradient id="cg" x1="0" y1="0" x2="0" y2="1"><stop offset="0" stop-color="#939393"/><stop offset="1" stop-color="#5c5c5c"/></linearGradient></defs>
  <circle cx="13.6" cy="13.45" r="12" fill="url(#cg)"/>
  <path d="M8.7 8.55L18.5 18.35M18.5 8.55L8.7 18.35" stroke="#fff" stroke-width="2.05" fill="none"/>
</svg>
<div class="btn" style="left:1121px;width:41.5px;"></div>
<div class="btn" style="left:1167px;width:38px;"></div>
<span class="t" style="left:938.2px;top:307.1px;font-size:15.6px;line-height:17px;letter-spacing:0.779px;color:#222;-webkit-text-stroke:0.32px;">Export user list confirmation</span>
<span class="t" style="left:932.8px;top:368.7px;font-size:10.8px;line-height:12px;letter-spacing:0.253px;color:#333;">If you have a resource filter assigned that limits what</span>
<span class="t" style="left:932.8px;top:383.7px;font-size:10.8px;line-height:12px;letter-spacing:0.148px;color:#333;">users you can see, you will only see a selection of</span>
<span class="t" style="left:932.8px;top:398.7px;font-size:10.8px;line-height:12px;letter-spacing:0.133px;color:#333;">users on this page (Users – Users). If you export a file</span>
<span class="t" style="left:932.8px;top:413.7px;font-size:10.8px;line-height:12px;letter-spacing:0.229px;color:#333;">with users, the file will contain all users you have</span>
<span class="t" style="left:932.8px;top:428.7px;font-size:10.8px;line-height:12px;letter-spacing:0.184px;color:#333;">access to see. If you have limited the users shown on</span>
<span class="t" style="left:932.8px;top:443.7px;font-size:10.8px;line-height:12px;letter-spacing:0.138px;color:#333;">this page by selecting a Skill, a Profile or a User group,</span>
<span class="t" style="left:932.8px;top:458.7px;font-size:10.8px;line-height:12px;letter-spacing:0.345px;color:#333;">or written something in the Filter input box, the</span>
<span class="t" style="left:932.8px;top:473.7px;font-size:10.8px;line-height:12px;letter-spacing:0.207px;color:#333;">exported file will contain all users you have access to</span>
<span class="t" style="left:932.8px;top:488.7px;font-size:10.8px;line-height:12px;letter-spacing:0.241px;color:#333;">see (not only the ones shown on your screen when</span>
<span class="t" style="left:932.8px;top:503.7px;font-size:10.8px;line-height:12px;letter-spacing:0.236px;color:#333;">you have filtered).</span>
<span class="t" style="left:932.8px;top:533.7px;font-size:10.8px;line-height:12px;letter-spacing:0.295px;color:#333;">Do you want to generate and download a file with</span>
<span class="t" style="left:932.8px;top:548.7px;font-size:10.8px;line-height:12px;letter-spacing:-0.060px;color:#333;">users?</span>
<span class="t" style="left:1132.4px;top:604.0px;font-size:12px;line-height:14px;letter-spacing:-0.135px;color:#444;">Yes</span>
<span class="t" style="left:1178.6px;top:604.0px;font-size:12px;line-height:14px;letter-spacing:0.461px;color:#444;">No</span>

</body>
</html>
